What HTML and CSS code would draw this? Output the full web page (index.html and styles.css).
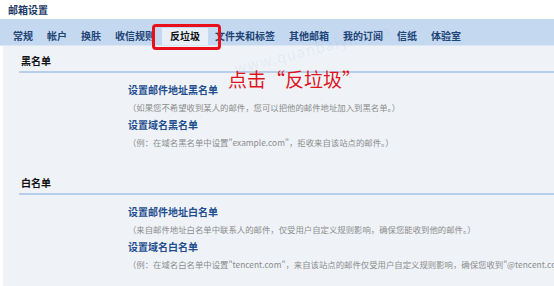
FILE: index.html
```html
<!DOCTYPE html>
<html lang="zh-CN">
<head>
<meta charset="utf-8">
<link rel="stylesheet" href="styles.css">
</head>
<body>
<div class="page">
  <div class="title">邮箱设置</div>
  <nav class="tabs">
    <span class="tab">常规</span>
    <span class="tab">帐户</span>
    <span class="tab">换肤</span>
    <span class="tab">收信规则</span>
    <span class="tab active">反垃圾</span>
    <span class="tab">文件夹和标签</span>
    <span class="tab">其他邮箱</span>
    <span class="tab">我的订阅</span>
    <span class="tab">信纸</span>
    <span class="tab">体验室</span>
    <span class="highlight"></span>
  </nav>
  <main class="content">
    <div class="note">点击“反垃圾”</div>
    <section class="group">
      <h2 class="group-title">黑名单</h2>
      <ul class="items">
        <li class="link">设置邮件地址黑名单</li>
        <li class="desc">（如果您不希望收到某人的邮件，您可以把他的邮件地址加入到黑名单。）</li>
        <li class="link">设置域名黑名单</li>
        <li class="desc">（例：在域名黑名单中设置"example.com"，拒收来自该站点的邮件。）</li>
      </ul>
    </section>
    <section class="group group-white">
      <h2 class="group-title">白名单</h2>
      <ul class="items">
        <li class="link">设置邮件地址白名单</li>
        <li class="desc">（来自邮件地址白名单中联系人的邮件，仅受用户自定义规则影响，确保您能收到他的邮件。）</li>
        <li class="link">设置域名白名单</li>
        <li class="desc">（例：在域名白名单中设置"tencent.com"，来自该站点的邮件仅受用户自定义规则影响，确保您收到"@tencent.com"的邮件。）</li>
      </ul>
    </section>
  </main>
  <div class="watermark">www.quanbaiyi.com</div>
</div>
</body>
</html>
```

FILE: styles.css
```css
html, body {
  margin: 0;
  padding: 0;
  background: #ffffff;
}
body {
  font-family: "Noto Sans CJK SC", "Noto Sans", sans-serif;
  width: 554px;
  height: 286px;
  overflow: hidden;
}
.page {
  position: relative;
  display: flex;
  flex-direction: column;
  height: 286px;
}
.title {
  height: 19px;
  line-height: 20px;
  padding-left: 8px;
  font-size: 10px;
  font-weight: 700;
  color: #1b3a66;
}
.tabs {
  position: relative;
  z-index: 2;
  height: 27px;
  background: #c4d8f0;
  border-bottom: 1px solid #dbe7f5;
  display: flex;
  align-items: flex-end;
  padding-left: 6px;
  box-sizing: border-box;
}
.tab {
  height: 17px;
  line-height: 16px;
  padding: 0 7px;
  font-size: 10px;
  font-weight: 700;
  color: #1d4477;
  white-space: nowrap;
}
.tab.active {
  background: #e8eff8;
  color: #111;
  padding: 0 8px 0 8px;
}
.highlight {
  position: absolute;
  left: 152px;
  top: 5px;
  width: 69px;
  height: 26px;
  box-sizing: border-box;
  border: 3px solid #e8101a;
  border-radius: 4px;
}
.content {
  position: relative;
  z-index: 1;
  flex: 1;
  margin-left: 3px;
  background: #eff3f8;
  overflow: hidden;
}
.group {
  padding-left: 16px;
}
.group-title {
  margin: 5px 0 0 0;
  height: 20px;
  line-height: 20px;
  padding-left: 2px;
  font-size: 10px;
  font-weight: 700;
  color: #111;
  border-bottom: 2px solid #b8cfec;
}
.group-white .group-title {
  margin-top: 22px;
}
.items {
  list-style: none;
  margin: 0;
  padding: 8px 0 0 109px;
}
.items li {
  height: 17.5px;
  line-height: 17.5px;
  white-space: nowrap;
}
.link {
  font-size: 10px;
  font-weight: 700;
  color: #1f4e8f;
}
.desc {
  font-size: 8.4px;
  color: #8c8c8c;
}
.note {
  position: absolute;
  left: 225px;
  top: 20px;
  font-size: 19px;
  line-height: 26px;
  color: #e0141c;
  white-space: nowrap;
}
.watermark {
  position: absolute;
  z-index: 3;
  left: 232px;
  top: 38px;
  font-size: 15px;
  color: rgba(150, 175, 210, 0.14);
  transform: rotate(-14deg);
  white-space: nowrap;
  letter-spacing: 1px;
  pointer-events: none;
}
```
